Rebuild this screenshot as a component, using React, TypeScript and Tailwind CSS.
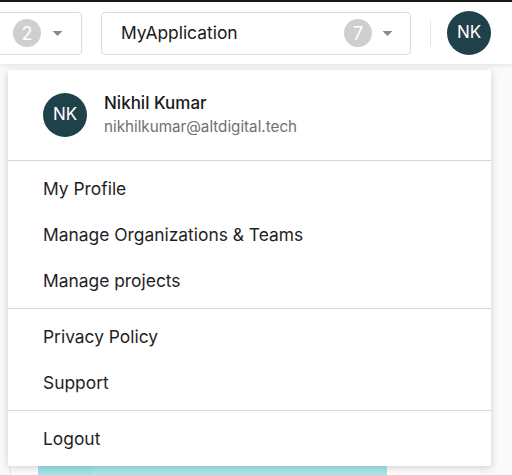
import React from 'react';

const font = { fontFamily: 'Inter, "Noto Sans", sans-serif' };

function Caret() {
  return (
    <svg width="11" height="7" viewBox="0 0 11 7" className="shrink-0">
      <path d="M0.5 1h10L5.5 6z" fill="#8a8a8a" />
    </svg>
  );
}

function Count({ n }: { n: number }) {
  return (
    <div className="w-[28px] h-[28px] rounded-full bg-[#cfcfcf] text-white text-[18px] flex items-center justify-center">
      {n}
    </div>
  );
}

export default function App() {
  const groups = [
    ['My Profile', 'Manage Organizations & Teams', 'Manage projects'],
    ['Privacy Policy', 'Support'],
    ['Logout'],
  ];

  return (
    <div className="relative w-[512px] h-[475px] overflow-hidden bg-[#fafafa]" style={font}>
      <div className="h-[2px] bg-[#1a1a1a]" />
      <header className="h-[62px] bg-white shadow-[0_2px_4px_rgba(0,0,0,0.08)] flex items-center relative z-10">
        <div className="ml-[-20px] w-[102px] h-[43px] border border-[#dcdcdc] rounded-[4px] flex items-center justify-end gap-[11px] pr-[18px]">
          <Count n={2} />
          <Caret />
        </div>
        <div className="ml-[19px] w-[310px] h-[43px] border border-[#dcdcdc] rounded-[4px] flex items-center pl-[19px] pr-[17px]">
          <span className="flex-1 text-[17.4px] text-[#1a1a1a]">MyApplication</span>
          <div className="flex items-center gap-[10px]">
            <Count n={7} />
            <Caret />
          </div>
        </div>
        <div className="ml-[19px] w-px h-[26px] bg-[#e6e6e6]" />
        <div className="ml-[16px] w-[44px] h-[44px] rounded-full bg-[#1f414a] text-white text-[17px] flex items-center justify-center">
          NK
        </div>
      </header>

      {/* page content behind the menu */}
      <div className="mt-[44px] ml-[10px] w-[470px] h-[400px] bg-white border-l border-t border-[#ececec]">
        <div className="mt-[355px] ml-[27px] w-[349px] h-[20px] bg-[#a6e9ef] flex">
          <div className="w-[55px] bg-[#9fe6ec]" />
        </div>
      </div>

      <div className="absolute left-[8px] top-[70px] w-[483px] bg-white rounded-[2px] shadow-[0_2px_8px_rgba(0,0,0,0.18)] z-20">
        <div className="flex items-center h-[90px] pl-[35px] gap-[17px]">
          <div className="w-[44px] h-[44px] rounded-full bg-[#1f414a] text-white text-[17px] flex items-center justify-center">
            NK
          </div>
          <div className="flex flex-col gap-[3px] -mt-[2px]">
            <span className="text-[17px] text-[#1a1a1a] font-medium leading-[21px]">Nikhil Kumar</span>
            <span className="text-[15.2px] text-[#707070] leading-[19px]">nikhilkumar@altdigital.tech</span>
          </div>
        </div>
        {groups.map((g, i) => (
          <div key={i} className="border-t border-[#d6d6d6] pt-[5px] pb-[4px]">
            {g.map((item) => (
              <div key={item} className="h-[46px] flex items-center pl-[35px] text-[17.4px] text-[#1f1f1f]">
                {item}
              </div>
            ))}
          </div>
        ))}
      </div>
    </div>
  );
}
